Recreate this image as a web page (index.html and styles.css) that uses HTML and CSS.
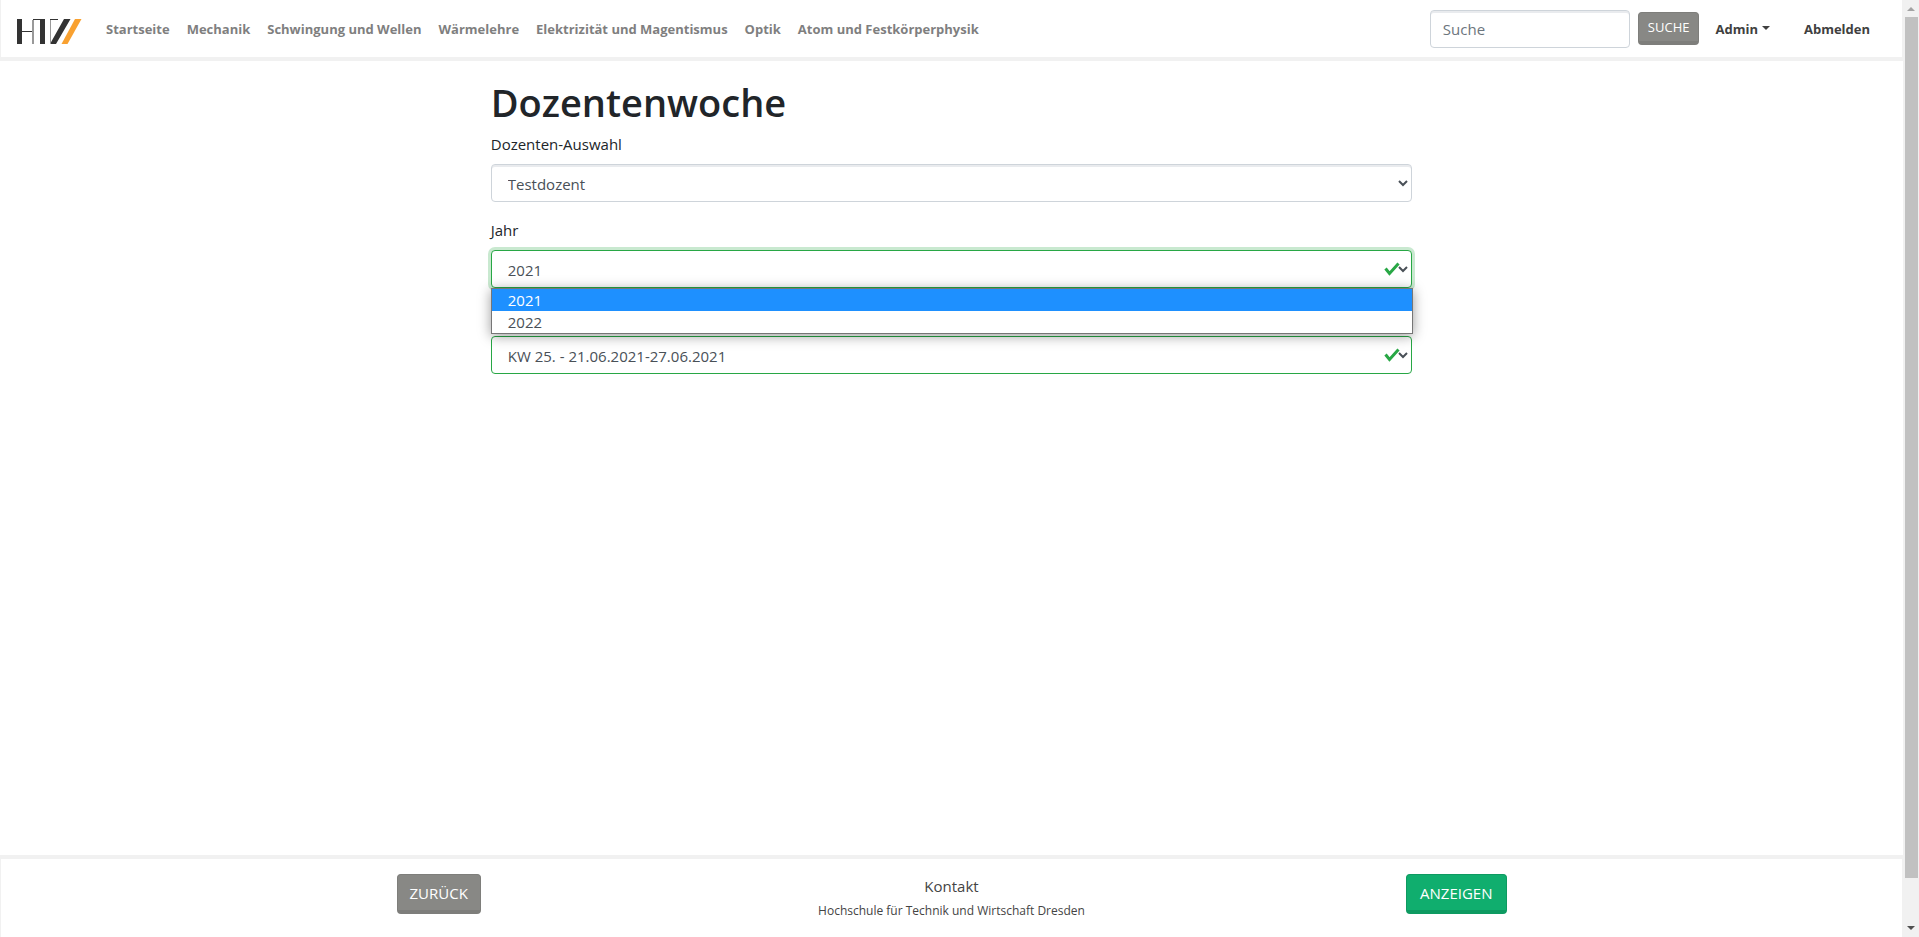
FILE: index.html
```html
<!DOCTYPE html>
<html lang="de">
<head>
<meta charset="utf-8">
<title>Dozentenwoche</title>
<link rel="stylesheet" href="styles.css">
</head>
<body>
<div class="page">
  <header class="navbar">
    <a class="brand" href="#" aria-label="HTW">
      <svg width="66" height="26" viewBox="0 0 66 26">
        <path fill="#333" d="M0 0h5v25H0zM23 0h5v25h-5zM47 0h6.500L39 25h-6z"/>
        <path fill="#333" d="M5 12h11v1H5zM16 0h7v1h-7zM33 0h8v1h-8z"/>
        <path fill="#999" d="M15 1h2v24h-2zM33 1h1v24h-1z"/>
        <path fill="#f9a130" d="M58 0h6.500L50.500 25H44.500z"/>
      </svg>
    </a>
    <nav class="links">
      <a href="#">Startseite</a>
      <a href="#">Mechanik</a>
      <a href="#">Schwingung und Wellen</a>
      <a href="#">Wärmelehre</a>
      <a href="#">Elektrizität und Magentismus</a>
      <a href="#">Optik</a>
      <a href="#">Atom und Festkörperphysik</a>
    </nav>
    <form class="search">
      <input class="control search-input" type="search" placeholder="Suche" aria-label="Suche">
      <button class="btn btn-small" type="button">SUCHE</button>
    </form>
    <nav class="account">
      <a class="dropdown" href="#">Admin</a>
      <a href="#">Abmelden</a>
    </nav>
  </header>

  <main class="content">
    <h1>Dozentenwoche</h1>
    <div class="group">
      <label for="dozent">Dozenten-Auswahl</label>
      <select class="control" id="dozent"><option>Testdozent</option></select>
    </div>
    <div class="group">
      <label for="jahr">Jahr</label>
      <div class="field">
        <select class="control valid focused" id="jahr"><option>2021</option><option>2022</option></select>
        <svg class="check" width="16" height="14" viewBox="0 0 16 14"><path d="M1.500 6.500L5.500 11.500L14.500 1.500"/></svg>
        <ul class="options">
          <li class="active">2021</li>
          <li>2022</li>
        </ul>
      </div>
    </div>
    <div class="group group-week">
      <div class="field">
        <select class="control valid" aria-label="KW"><option>KW 25. - 21.06.2021-27.06.2021</option></select>
        <svg class="check" width="16" height="14" viewBox="0 0 16 14"><path d="M1.500 6.500L5.500 11.500L14.500 1.500"/></svg>
      </div>
    </div>
  </main>

  <footer class="footer">
    <div class="footer-inner">
      <button class="btn" type="button">ZURÜCK</button>
      <div class="contact">
        <a href="#">Kontakt</a>
        <small>Hochschule für Technik und Wirtschaft Dresden</small>
      </div>
      <button class="btn btn-green" type="button">ANZEIGEN</button>
    </div>
  </footer>
</div>
<div class="scrollbar">
  <svg width="16" height="17" viewBox="0 0 16 17"><path fill="#a3a3a3" d="M4 11h8L8 7z"/></svg>
  <div class="track"><div class="thumb"></div></div>
  <svg width="16" height="17" viewBox="0 0 16 17"><path fill="#505050" d="M4 6h8l-4 4z"/></svg>
</div>
</body>
</html>
```
FILE: styles.css
```css
* { box-sizing: border-box; }
body {
  margin: 0;
  height: 100vh;
  display: grid;
  grid-template-columns: 1fr 16px;
  font: 16px/24px "Segoe UI", "Open Sans", "Noto Sans", sans-serif;
  color: #212529;
  background: #fff;
}
a { color: inherit; text-decoration: none; }
.page { display: flex; flex-direction: column; min-width: 0; }

.navbar {
  display: flex;
  align-items: center;
  height: 61px;
  padding: 0 32px 0 16px;
  border: solid #f1f1f1;
  border-width: 0 1px 4px;
  font-size: 13px;
  font-weight: 700;
}
.brand { display: flex; margin-right: 23px; padding-top: 6px; }
.links { display: flex; gap: 17px; color: #7f7f7f; white-space: nowrap; }
.search { display: flex; align-items: center; gap: 8px; margin-left: auto; }
.account { display: flex; gap: 34px; margin-left: 16px; color: #404040; }
.dropdown::after {
  content: "";
  display: inline-block;
  margin-left: 4px;
  vertical-align: 4px;
  border: 4px solid transparent;
  border-top-color: currentColor;
  border-bottom: 0;
}

.control {
  display: block;
  width: 100%;
  height: 38px;
  padding: 8px 12px 6px;
  border: 1px solid #ced4da;
  border-radius: 4px;
  background-color: #fff;
  box-shadow: inset 0 2px 0 #e9ebee;
  color: #495057;
  font: inherit;
}
.search-input { width: 200px; padding: 6px 12px; font-size: 15px; font-weight: 400; }
.search-input::placeholder { color: #6c757d; }

.btn {
  height: 40px;
  padding: 0 12px;
  border: 1px solid #7e7e7b;
  border-bottom-width: 4px;
  border-radius: 4px;
  background: #888885;
  color: #fff;
  font: 15px/20px "Segoe UI", "Open Sans", "Noto Sans", sans-serif;
}
.btn-small { height: 33px; padding: 0 9px; font-size: 13px; }
.btn-green { padding: 0 13px; background: #10ae6e; border-color: #0e9a61; }

.content { width: 50%; margin: 0 auto; padding: 17px 15px 0; flex: 1; }
h1 { margin: 0 0 6px; font-size: 38px; line-height: 48px; font-weight: 600; }
.group { margin-bottom: 16px; font-size: 15px; }
.group label { display: block; margin-bottom: 8px; }
.group-week { padding-top: 32px; }
.field { position: relative; }
.valid { border-color: #28a745; box-shadow: none; }
.focused { box-shadow: 0 0 0 3px rgba(40, 167, 69, .25); }
.check {
  position: absolute;
  right: 12px;
  top: 12px;
  fill: none;
  stroke: #28a745;
  stroke-width: 3;
  pointer-events: none;
}
.options {
  position: absolute;
  z-index: 2;
  top: 100%;
  left: 0;
  right: -1px;
  margin: 0;
  padding: 0;
  border: 1px solid #767676;
  background: #fff;
  box-shadow: 0 2px 12px rgba(0, 0, 0, .4);
  list-style: none;
  line-height: 22px;
  color: #495057;
}
.options li { padding: 0 16px; }
.options .active { background: #1e90ff; color: #fff; }

.footer {
  height: 82px;
  border: solid #f1f1f1;
  border-width: 4px 1px 0;
}
.footer-inner {
  display: grid;
  grid-template-columns: 1fr auto 1fr;
  align-items: start;
  max-width: 1110px;
  margin: 0 auto;
  padding-top: 15px;
}
.footer-inner .btn { justify-self: start; }
.footer-inner .btn-green { justify-self: end; }
.contact { display: grid; gap: 1px; text-align: center; color: #444; font-size: 15px; }
.contact small { font-size: 12px; }

.scrollbar { display: flex; flex-direction: column; background: #f1f1f1; }
.track { flex: 1; padding: 0 1px 0 2px; }
.thumb { height: 95.4%; background: #c1c1c1; }
```
